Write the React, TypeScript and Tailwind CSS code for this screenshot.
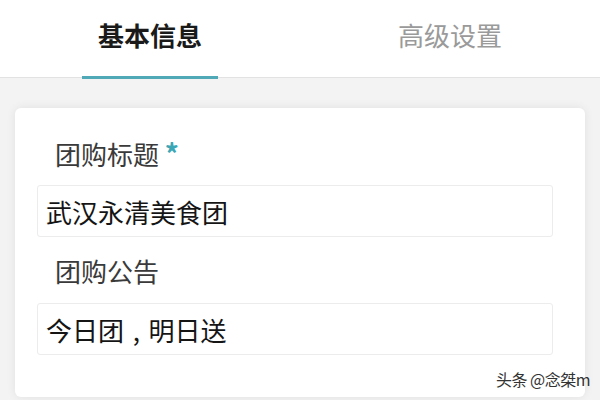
import { useState } from "react"

const tabs = ["基本信息", "高级设置"]

const font = { fontFamily: '"Noto Sans CJK SC", "Noto Sans", sans-serif' }

export default function App() {
  const [activeTab, setActiveTab] = useState("基本信息")
  const [title, setTitle] = useState("武汉永清美食团")
  const [notice, setNotice] = useState("今日团\u2004,\u2004明日送")

  return (
    <div
      className="flex h-[400px] w-[600px] flex-col overflow-hidden bg-[#f3f3f3]"
      style={font}
    >
      <div className="flex h-[78px] shrink-0 border-b border-[#e2e2e2] bg-white">
        {tabs.map((tab) => (
          <button
            key={tab}
            onClick={() => setActiveTab(tab)}
            className="relative flex flex-1 items-center justify-center pb-[8px]"
          >
            <span
              className={`text-[26px] leading-none ${
                activeTab === tab
                  ? "font-bold text-[#1a1a1a]"
                  : "text-[#9a9a9a]"
              }`}
            >
              {tab}
            </span>
            {activeTab === tab && (
              <span className="absolute bottom-[-2px] left-1/2 h-[3px] w-[136px] -translate-x-1/2 bg-[#4fa9b6]" />
            )}
          </button>
        ))}
      </div>

      <div className="relative flex-1 px-[15px] pt-[30px]">
        <div className="rounded-[6px] bg-white pb-[42px] pl-[22px] pr-[32px] pt-[30px] shadow-[0_0_10px_rgba(0,0,0,0.08)]">
          <div className="pl-[18px] text-[26px] leading-[30px] text-[#3a3a3a]">
            团购标题{" "}
            <span className="text-[28px] font-bold text-[#3aa6b6]">*</span>
          </div>
          <input
            value={title}
            onChange={(e) => setTitle(e.target.value)}
            className="mt-[16px] block h-[52px] w-full rounded-[3px] border border-[#ececec] px-[8px] text-[26px] text-[#151515] outline-none"
          />
          <div className="mt-[19px] pl-[18px] text-[26px] leading-[30px] text-[#3a3a3a]">
            团购公告
          </div>
          <input
            value={notice}
            onChange={(e) => setNotice(e.target.value)}
            className="mt-[17px] block h-[52px] w-full rounded-[3px] border border-[#ececec] px-[8px] text-[26px] text-[#151515] outline-none"
          />
        </div>
        <div className="absolute right-[10px] top-[293px] text-[16px] leading-none tracking-[-0.5px] text-[#333]">
          头条 @念桀m
        </div>
      </div>
    </div>
  )
}
